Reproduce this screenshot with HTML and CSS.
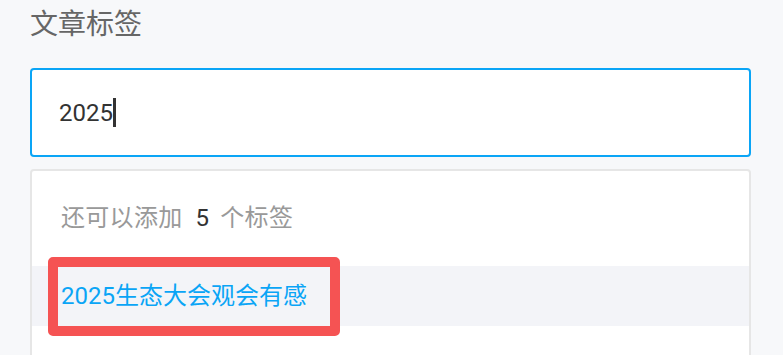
FILE: index.html
```html
<!DOCTYPE html>
<html lang="zh">
<head>
<meta charset="utf-8">
<link rel="stylesheet" href="styles.css">
</head>
<body>
<div class="field">
  <div class="label">文章标签</div>
  <div class="input"><span class="value">2025</span><span class="caret"></span></div>
  <div class="dropdown">
    <div class="hint">还可以添加<span class="count">5</span>个标签</div>
    <div class="option">
      <span class="option-text">2025生态大会观会有感</span>
      <div class="highlight"></div>
    </div>
    <div class="option-empty"></div>
  </div>
</div>
</body>
</html>
```
FILE: styles.css
```css
html, body {
  margin: 0;
  padding: 0;
  background: #f7f8fa;
  overflow: hidden;
}
body {
  font-family: Roboto, "Noto Sans CJK SC", sans-serif;
}
.field {
  width: 721px;
  margin-left: 30px;
  display: flex;
  flex-direction: column;
}
.label {
  font-size: 28px;
  line-height: 50px;
  color: #666666;
}
.input {
  margin-top: 18px;
  box-sizing: border-box;
  height: 89px;
  border: 2px solid #0aa5f6;
  border-radius: 4px;
  background: #ffffff;
  display: flex;
  align-items: center;
  padding-left: 27px;
}
.value {
  font-size: 24px;
  color: #333333;
  line-height: 30px;
}
.caret {
  display: inline-block;
  width: 3px;
  height: 29px;
  background: #333333;
}
.dropdown {
  margin-top: 12px;
  border: 2px solid #e6e6e6;
  border-radius: 4px;
  background: #ffffff;
  padding-top: 30px;
  display: flex;
  flex-direction: column;
}
.hint {
  font-size: 24px;
  line-height: 34px;
  color: #999999;
  padding-left: 29px;
  letter-spacing: 0.3px;
}
.count {
  color: #333333;
  margin: 0 11px 0 13px;
}
.option {
  position: relative;
  margin-top: 31px;
  height: 60px;
  background: #f3f4f8;
  display: flex;
  align-items: center;
  padding-left: 29px;
}
.option-text {
  font-size: 24px;
  color: #0aa5f6;
  line-height: 30px;
}
.highlight {
  position: absolute;
  left: 16px;
  top: -9px;
  width: 292px;
  height: 79px;
  box-sizing: border-box;
  border: 10px solid #f55353;
  border-radius: 5px;
}
.option-empty {
  height: 60px;
}
```
